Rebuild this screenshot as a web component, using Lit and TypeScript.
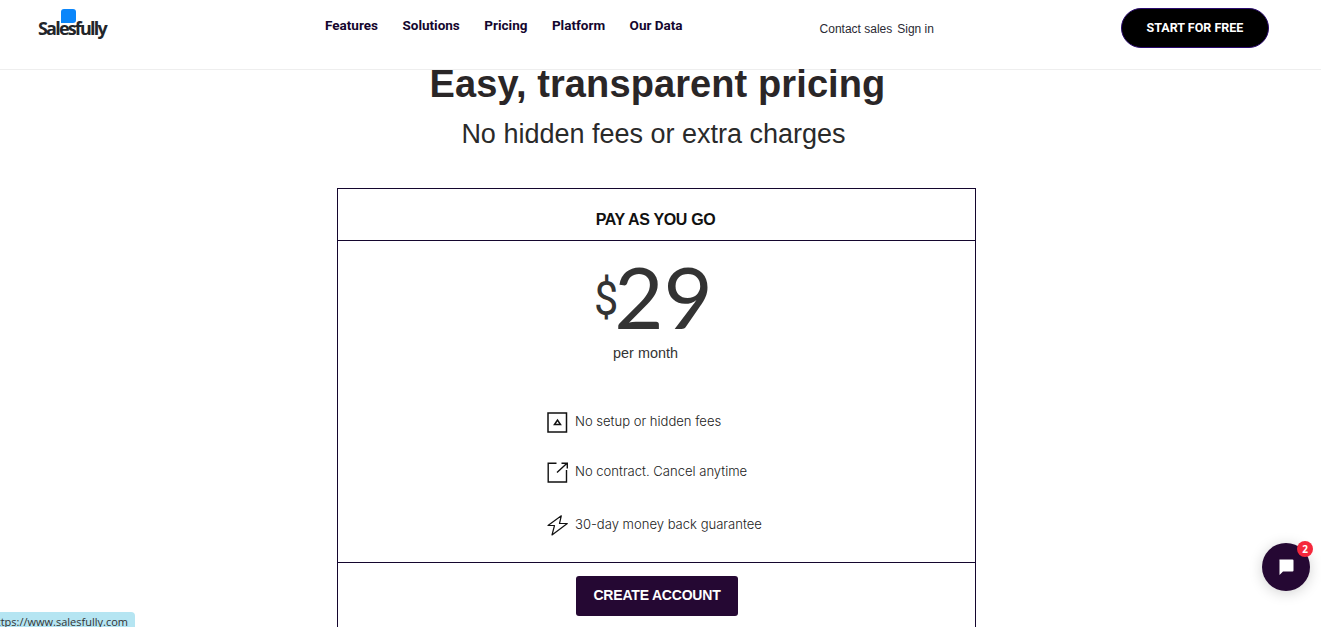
import { LitElement, html, css } from "lit";
import { customElement } from "lit/decorators.js";

@customElement("app-root")
export class AppRoot extends LitElement {
  static styles = css`
    :host { display: block; height: 627px; overflow: hidden; position: relative; background: #fff; font-family: "Liberation Sans", Arial, sans-serif; color: #2a2a2a; }
    header { height: 69px; border-bottom: 1px solid #eeeeee; display: flex; align-items: flex-start; box-sizing: content-box; }
    .logo { position: relative; margin: 13px 0 0 38px; width: 72px; height: 26px; font-family: "Open Sans", sans-serif; font-weight: 700; font-size: 18px; letter-spacing: -1.8px; color: #22252a; line-height: 26px; }
    .logo-text { position: relative; display: block; padding-top: 3px; line-height: 24px; }
    .bubble { position: absolute; left: 23px; top: -4px; width: 15px; height: 14px; border-radius: 3px 3px 3px 0; background: #0b86fa; }
    nav { display: flex; gap: 24.5px; margin: 17px 0 0 215px; font-family: Roboto, sans-serif; font-weight: 700; font-size: 13.5px; line-height: 17px; color: #14062e; }
    .aux { display: flex; gap: 5px; margin: 21px 0 0 137px; font-size: 12px; line-height: 16px; color: #2a2a33; }
    .cta { margin: 8px 0 0 187px; width: 148px; height: 40px; box-sizing: border-box; border: 1px solid #2a0a6e; border-radius: 20px; background: #000; color: #fff; font-family: Roboto, sans-serif; font-weight: 700; font-size: 12.5px; display: flex; align-items: center; justify-content: center; padding-bottom: 2px; }
    main { display: flex; flex-direction: column; align-items: center; padding-right: 8px; }
    h1 { margin: -8px 0 0 2px; font-size: 38px; line-height: 44px; font-weight: 700; letter-spacing: 0.1px; color: #2a2627; }
    h2 { margin: 11px 6px 0 0; font-size: 27px; line-height: 34px; font-weight: 400; color: #2a2a2a; }
    .card { margin-top: 37px; width: 639px; box-sizing: border-box; border: 1px solid #14062e; border-bottom: none; height: 500px; display: flex; flex-direction: column; }
    .plan { height: 52px; flex: none; box-sizing: border-box; border-bottom: 1px solid #14062e; display: flex; align-items: flex-end; justify-content: center; padding: 0 2px 10px 0; font-size: 16px; line-height: 20px; font-weight: 700; letter-spacing: -0.35px; color: #111; }
    .body { height: 322px; flex: none; box-sizing: border-box; border-bottom: 1px solid #14062e; display: flex; flex-direction: column; position: relative; }
    .price { display: flex; justify-content: center; align-items: flex-start; margin: 13px 0 0 -6px; color: #333; height: 84px; }
    .cur { display: block; font-family: Roboto, sans-serif; font-weight: 400; font-size: 48px; line-height: 50px; margin-top: 20px; letter-spacing: -7px; transform: scaleX(.9); transform-origin: left center; }
    .num { font-family: Lato, sans-serif; font-weight: 400; font-size: 85px; line-height: 84px; }
    .per { text-align: center; margin: 5px 0 0 -22px; font-size: 14.4px; line-height: 20px; color: #333; }
    ul { list-style: none; margin: 0; padding: 0 0 0 209px; display: flex; flex-direction: column; }
    li { display: flex; align-items: center; gap: 7px; height: 24px; font-family: Inter, sans-serif; font-weight: 300; font-size: 13.05px; color: #222; }
    li svg { flex: none; display: block; margin-top: 2px; }
    li:nth-child(1) { margin-top: 46px; }
    li:nth-child(2) { margin-top: 26px; }
    li:nth-child(3) { margin-top: 29px; }
    .foot { display: flex; justify-content: center; padding-top: 13px; }
    .create { width: 162px; height: 40px; background: #250833; color: #fff; border-radius: 3px; font-weight: 700; font-size: 14px; letter-spacing: -0.2px; display: flex; align-items: center; justify-content: center; padding: 0 0 2px 1px; box-sizing: border-box; }
    .status { position: absolute; left: 0; top: 612px; width: 135px; height: 20px; background: #b5e5f2; border-radius: 0 4px 0 0; font-family: "Open Sans", sans-serif; font-size: 11px; line-height: 20px; color: #333; white-space: nowrap; overflow: hidden; text-indent: -10px; }
    .chat { position: absolute; left: 1262px; top: 543px; width: 48px; height: 48px; border-radius: 50%; background: #250833; box-shadow: 0 2px 14px rgba(0,0,0,.18); display: flex; align-items: center; justify-content: center; }
    .badge { position: absolute; left: 35px; top: -2px; width: 16px; height: 16px; border-radius: 50%; background: #f5283c; color: #fff; font-family: "Open Sans", sans-serif; font-size: 10px; font-weight: 700; line-height: 16px; text-align: center; }
  `;

  render() {
    return html`
      <header>
        <div class="logo"><span class="bubble"></span><span class="logo-text">Salesfully</span></div>
        <nav><span>Features</span><span>Solutions</span><span>Pricing</span><span>Platform</span><span>Our Data</span></nav>
        <div class="aux"><span>Contact sales</span><span>Sign in</span></div>
        <div class="cta">START FOR FREE</div>
      </header>
      <main>
        <h1>Easy, transparent pricing</h1>
        <h2>No hidden fees or extra charges</h2>
        <section class="card">
          <div class="plan">PAY AS YOU GO</div>
          <div class="body">
            <div class="price"><span class="cur">$</span><span class="num">29</span></div>
            <div class="per">per month</div>
            <ul>
              <li>
                <svg width="21" height="21" viewBox="0 0 21 21" fill="none" stroke="#111"><rect x="1" y="1" width="18.5" height="19" stroke-width="1.5"/><path d="M7.5 12.5 10.5 8 13.5 12.5Z" stroke-width="1.5"/></svg>
                No setup or hidden fees
              </li>
              <li>
                <svg width="21" height="21" viewBox="0 0 21 21" fill="none" stroke="#111" stroke-width="1.4"><path d="M9.5 1.2H1.2V20H19.5V8"/><path d="M10 10.5 20 1.2M14.5 1.2H20.3V6.5" /></svg>
                No contract. Cancel anytime
              </li>
              <li>
                <svg width="21" height="21" viewBox="0 0 21 21" fill="none" stroke="#111" stroke-width="1.2" stroke-linejoin="round"><path d="M14.3.8 1 10.5H7.5L5 20 20.3 8.5H12.5Z"/></svg>
                30-day money back guarantee
              </li>
            </ul>
          </div>
          <div class="foot"><div class="create">CREATE ACCOUNT</div></div>
        </section>
      </main>
      <div class="status">https://www.salesfully.com</div>
      <div class="chat">
        <svg width="18" height="18" viewBox="0 0 18 18"><path d="M2.5 1.5H15.5A1 1 0 0 1 16.5 2.5V12.5A1 1 0 0 1 15.5 13.5H6L2.5 17V2.5A1 1 0 0 1 2.5 1.5Z" fill="#fff"/></svg>
        <span class="badge">2</span>
      </div>
    `;
  }
}
